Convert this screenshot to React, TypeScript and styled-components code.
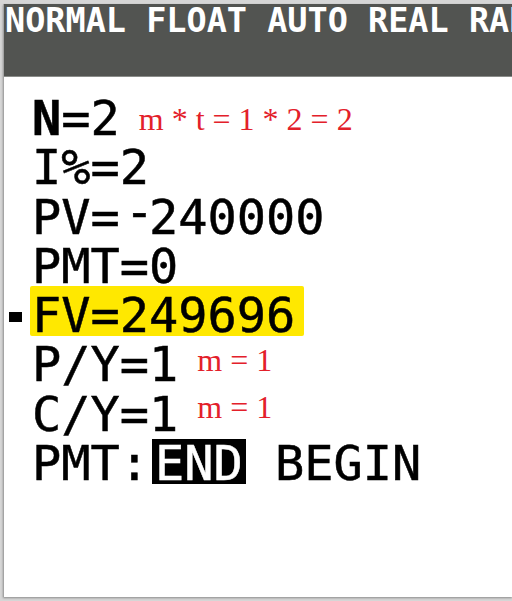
import React from "react";
import styled, { createGlobalStyle } from "styled-components";

const Global = createGlobalStyle`
  html, body {
    margin: 0;
    padding: 0;
    background: #d6d6d6;
  }
  body {
    width: 512px;
    height: 601px;
    overflow: hidden;
  }
`;

const Frame = styled.div`
  box-sizing: border-box;
  height: 601px;
  padding: 4px 0 4px 3px;
`;

const Screen = styled.div`
  height: 593px;
  background: #ffffff;
  border-left: 1px solid #a4a4a4;
  box-shadow: 0 1px 2px rgba(0, 0, 0, 0.35);
  display: flex;
  flex-direction: column;
  overflow: hidden;
`;

const StatusBar = styled.div`
  height: 73px;
  flex: none;
  background: #525451;
  border-bottom: 1px solid #8a8c89;
  box-sizing: border-box;
  color: #ffffff;
  font-family: "DejaVu Sans Mono", monospace;
  font-weight: bold;
  font-size: 33.5px;
  line-height: 34px;
  padding-left: 1px;
  white-space: nowrap;
  overflow: hidden;
`;

const Lines = styled.div`
  padding-top: 17px;
  display: flex;
  flex-direction: column;
`;

const Row = styled.div`
  display: flex;
  height: 49.3px;
  font-family: "DejaVu Sans Mono", monospace;
  font-size: 48.6px;
  line-height: 49px;
  color: #000;
  -webkit-text-stroke: 0.5px currentColor;
  white-space: pre;
`;

const Gutter = styled.div`
  width: 28px;
  flex: none;
  box-sizing: border-box;
  padding: 21px 0 0 5px;
`;

const Cursor = styled.div`
  width: 13px;
  height: 10px;
  background: #000;
`;

const Bold = styled.span`
  font-weight: bold;
`;

const Neg = styled.span`
  display: inline-block;
  line-height: 0;
  margin: 0 -5px 0 5px;
  vertical-align: 6px;
`;

const Highlight = styled.span`
  display: inline-block;
  box-sizing: border-box;
  height: 50px;
  margin: -5px 0 0 -2px;
  padding: 5px 9px 0 2px;
  background: #ffe800;
  border-radius: 2px;
`;

const Inverse = styled.span`
  display: inline-block;
  height: 45px;
  margin-left: 3px;
  padding: 0 3px;
  box-sizing: border-box;
  line-height: 48px;
  background: #000;
  color: #fff;
  -webkit-text-stroke: 0.5px #fff;
`;

const Note = styled.span<{ $raise: number }>`
  margin-left: 19px;
  font-family: "Liberation Serif", "Times New Roman", serif;
  font-size: 32px;
  line-height: 0;
  color: #e3202a;
  -webkit-text-stroke: 0;
  vertical-align: ${(p) => p.$raise}px;
`;

const Text = styled.span``;

export default function App() {
  return (
    <>
      <Global />
      <Frame>
        <Screen>
          <StatusBar>NORMAL FLOAT AUTO REAL RADIAN MP</StatusBar>
          <Lines>
            <Row>
              <Gutter />
              <Text>
                <Bold>N</Bold>=2
                <Note $raise={5}>m * t = 1 * 2 = 2</Note>
              </Text>
            </Row>
            <Row>
              <Gutter />
              <Text>I%=2</Text>
            </Row>
            <Row>
              <Gutter />
              <Text>
                PV=<Neg>-</Neg>240000
              </Text>
            </Row>
            <Row>
              <Gutter />
              <Text>PMT=0</Text>
            </Row>
            <Row>
              <Gutter>
                <Cursor />
              </Gutter>
              <Highlight>FV=249696</Highlight>
            </Row>
            <Row>
              <Gutter />
              <Text>
                P/Y=1
                <Note $raise={10}>m = 1</Note>
              </Text>
            </Row>
            <Row>
              <Gutter />
              <Text>
                C/Y=1
                <Note $raise={13}>m = 1</Note>
              </Text>
            </Row>
            <Row>
              <Gutter />
              <Text>
                PMT:<Inverse>END</Inverse> BEGIN
              </Text>
            </Row>
          </Lines>
        </Screen>
      </Frame>
    </>
  );
}
